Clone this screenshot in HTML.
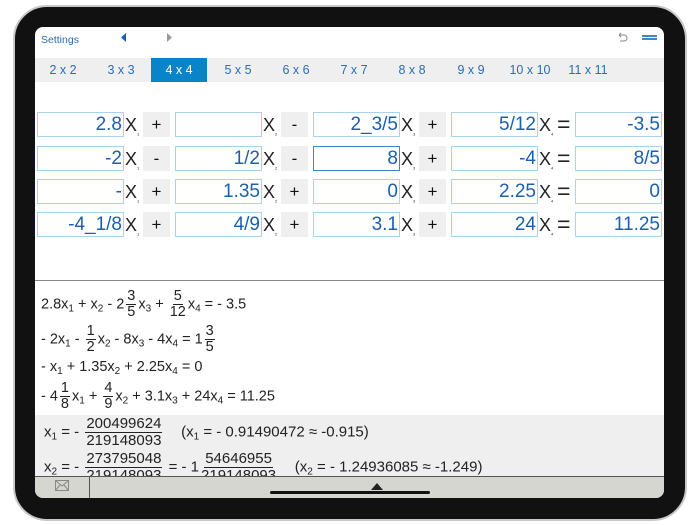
<!DOCTYPE html>
<html><head><meta charset="utf-8"><style>
*{margin:0;padding:0;box-sizing:border-box}
body{width:700px;height:525px;background:#fff;position:relative;overflow:hidden;font-family:"Liberation Sans",sans-serif}
.frame{position:absolute;left:13px;top:5px;width:674px;height:516px;border-radius:34px;background:#111;border:2px solid #c8c8c8}
.screen{position:absolute;left:35px;top:27px;width:629px;height:471px;background:#fff;border-radius:8px;overflow:hidden}
.a{position:absolute}
.tabs{left:0;top:31px;width:629px;height:24px;background:#efefef}
.tab{position:absolute;top:0;height:24px;line-height:24px;font-size:12.5px;color:#2a6db5;text-align:center;width:56px;margin-left:-28px}
.tab.sel{background:#0a84c8;color:#fff}
.in{position:absolute;height:25px;width:87px;border:1px solid #a9d3ec;font-size:19px;color:#1a5fb0;text-align:right;line-height:24px;padding-right:1px}
.in.f{border-color:#3a88c8}
.x{position:absolute;font-size:18px;color:#222;line-height:26px}
.x sub{font-size:4px}
.op{position:absolute;width:27px;height:25px;background:#efefef;text-align:center;line-height:25px;font-size:17px;color:#111}
.eq{position:absolute;font-size:23px;line-height:25px;color:#222}
.ln{position:absolute;left:6px;font-size:14.5px;color:#222;white-space:pre;display:block}
.ln sub{font-size:10px;vertical-align:-3px;line-height:0}
.fr{display:inline-flex;flex-direction:column;align-items:center;margin:0 2px;line-height:15px;vertical-align:middle}
.fr span:first-child{border-bottom:1px solid #222;padding:0 1px}
.res{left:0;top:388px;width:629px;height:62px;background:#efefef}
.r{font-size:15px}
.r .fr{line-height:16px}
</style></head><body>
<div class="frame"></div>
<div class="screen">
 <div class="a" style="left:6px;top:7px;font-size:10.5px;color:#2a6db5">Settings</div>
 <svg class="a" style="left:86px;top:6px" width="6" height="9"><path d="M5 0L0 4.5 5 9z" fill="#1a5fb0"/></svg>
 <svg class="a" style="left:131px;top:6px" width="6" height="9"><path d="M1 0L6 4.5 1 9z" fill="#999"/></svg>
 <svg class="a" style="left:581px;top:5px" width="12" height="12"><path d="M3 3h5a3 3 0 010 6H4M3 3l2-2M3 3l2 2" stroke="#888" fill="none" stroke-width="1"/></svg>
 <div class="a" style="left:607px;top:8px;width:15px;height:2px;background:#3a88c8"></div>
 <div class="a" style="left:607px;top:11px;width:15px;height:2px;background:#3a88c8"></div>
 <div class="a tabs">
  <div class="tab" style="left:28px">2 x 2</div>
  <div class="tab" style="left:86px">3 x 3</div>
  <div class="tab sel" style="left:144px">4 x 4</div>
  <div class="tab" style="left:203px">5 x 5</div>
  <div class="tab" style="left:261px">6 x 6</div>
  <div class="tab" style="left:319px">7 x 7</div>
  <div class="tab" style="left:377px">8 x 8</div>
  <div class="tab" style="left:436px">9 x 9</div>
  <div class="tab" style="left:495px">10 x 10</div>
  <div class="tab" style="left:553px">11 x 11</div>
 </div>
 <div style="position:absolute;left:0;top:85px">
  <div class="in" style="left:2px">2.8</div><div class="x" style="left:90px">X<sub>1</sub></div><div class="op" style="left:108px">+</div>
  <div class="in" style="left:140px"></div><div class="x" style="left:228px">X<sub>2</sub></div><div class="op" style="left:246px">-</div>
  <div class="in" style="left:278px">2_3/5</div><div class="x" style="left:366px">X<sub>3</sub></div><div class="op" style="left:384px">+</div>
  <div class="in" style="left:416px">5/12</div><div class="x" style="left:504px">X<sub>4</sub></div><div class="eq" style="left:522px">=</div>
  <div class="in" style="left:540px">-3.5</div>
 </div>
 <div style="position:absolute;left:0;top:119px">
  <div class="in" style="left:2px">-2</div><div class="x" style="left:90px">X<sub>1</sub></div><div class="op" style="left:108px">-</div>
  <div class="in" style="left:140px">1/2</div><div class="x" style="left:228px">X<sub>2</sub></div><div class="op" style="left:246px">-</div>
  <div class="in f" style="left:278px">8</div><div class="x" style="left:366px">X<sub>3</sub></div><div class="op" style="left:384px">+</div>
  <div class="in" style="left:416px">-4</div><div class="x" style="left:504px">X<sub>4</sub></div><div class="eq" style="left:522px">=</div>
  <div class="in" style="left:540px">8/5</div>
 </div>
 <div style="position:absolute;left:0;top:152px">
  <div class="in" style="left:2px">-</div><div class="x" style="left:90px">X<sub>1</sub></div><div class="op" style="left:108px">+</div>
  <div class="in" style="left:140px">1.35</div><div class="x" style="left:228px">X<sub>2</sub></div><div class="op" style="left:246px">+</div>
  <div class="in" style="left:278px">0</div><div class="x" style="left:366px">X<sub>3</sub></div><div class="op" style="left:384px">+</div>
  <div class="in" style="left:416px">2.25</div><div class="x" style="left:504px">X<sub>4</sub></div><div class="eq" style="left:522px">=</div>
  <div class="in" style="left:540px">0</div>
 </div>
 <div style="position:absolute;left:0;top:185px">
  <div class="in" style="left:2px">-4_1/8</div><div class="x" style="left:90px">X<sub>1</sub></div><div class="op" style="left:108px">+</div>
  <div class="in" style="left:140px">4/9</div><div class="x" style="left:228px">X<sub>2</sub></div><div class="op" style="left:246px">+</div>
  <div class="in" style="left:278px">3.1</div><div class="x" style="left:366px">X<sub>3</sub></div><div class="op" style="left:384px">+</div>
  <div class="in" style="left:416px">24</div><div class="x" style="left:504px">X<sub>4</sub></div><div class="eq" style="left:522px">=</div>
  <div class="in" style="left:540px">11.25</div>
 </div>
 <div class="a" style="left:0;top:253px;width:629px;height:1px;background:#888"></div>
 <div class="ln" style="top:262px">2.8x<sub>1</sub> + x<sub>2</sub> - 2<span class="fr"><span>3</span><span>5</span></span>x<sub>3</sub> + <span class="fr"><span>5</span><span>12</span></span>x<sub>4</sub> = - 3.5</div>
 <div class="ln" style="top:297px">- 2x<sub>1</sub> - <span class="fr"><span>1</span><span>2</span></span>x<sub>2</sub> - 8x<sub>3</sub> - 4x<sub>4</sub> = 1<span class="fr"><span>3</span><span>5</span></span></div>
 <div class="ln" style="top:332px">- x<sub>1</sub> + 1.35x<sub>2</sub> + 2.25x<sub>4</sub> = 0</div>
 <div class="ln" style="top:354px">- 4<span class="fr"><span>1</span><span>8</span></span>x<sub>1</sub> + <span class="fr"><span>4</span><span>9</span></span>x<sub>2</sub> + 3.1x<sub>3</sub> + 24x<sub>4</sub> = 11.25</div>
 <div class="a res"></div>
 <div class="ln r" style="top:389px;left:9px">x<sub>1</sub> = - <span class="fr"><span>200499624</span><span>219148093</span></span>    (x<sub>1</sub> = - 0.91490472 ≈ -0.915)</div>
 <div class="ln r" style="top:424px;left:9px">x<sub>2</sub> = - <span class="fr"><span>273795048</span><span>219148093</span></span> = - 1<span class="fr"><span>54646955</span><span>219148093</span></span>    (x<sub>2</sub> = - 1.24936085 ≈ -1.249)</div>
 <div class="a" style="left:0;top:449px;width:629px;height:22px;background:#d6d6d0;border-top:1px solid #555"></div>
 <svg class="a" style="left:20px;top:453px" width="14" height="11"><rect x="0.5" y="0.5" width="13" height="10" fill="none" stroke="#888"/><path d="M0.5 0.5L7 6 13.5 0.5M0.5 10.5L5 5M13.5 10.5L9 5" stroke="#888" fill="none"/></svg>
 <div class="a" style="left:54px;top:450px;width:1px;height:21px;background:#555"></div>
 <svg class="a" style="left:336px;top:456px" width="12" height="7"><path d="M0 7L6 0 12 7z" fill="#222"/></svg>
 <div class="a" style="left:235px;top:464px;width:160px;height:3px;background:#111;border-radius:2px"></div>
</div>
</body></html>
